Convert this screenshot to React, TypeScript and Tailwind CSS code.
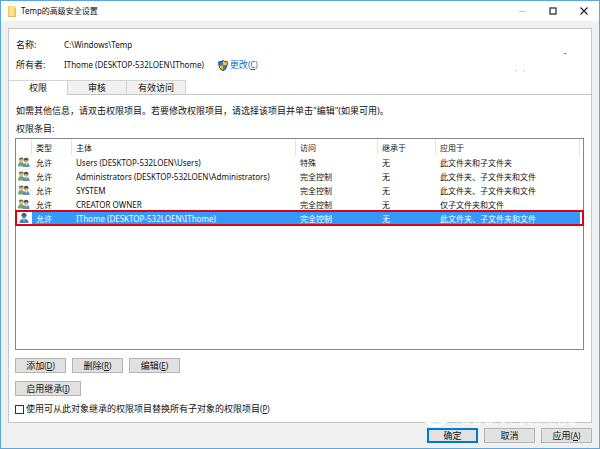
import type { ReactNode } from 'react';

const entries = [
  { icon: 'group', principal: 'Users (DESKTOP-532LOEN\\Users)', access: '特殊', applies: '此文件夹和子文件夹' },
  { icon: 'group', principal: 'Administrators (DESKTOP-532LOEN\\Administrators)', access: '完全控制', applies: '此文件夹、子文件夹和文件' },
  { icon: 'group', principal: 'SYSTEM', access: '完全控制', applies: '此文件夹、子文件夹和文件' },
  { icon: 'group', principal: 'CREATOR OWNER', access: '完全控制', applies: '仅子文件夹和文件' },
  { icon: 'user', principal: 'IThome (DESKTOP-532LOEN\\IThome)', access: '完全控制', applies: '此文件夹、子文件夹和文件', selected: true },
];

function FolderIcon() {
  return (
    <svg width="10" height="13" viewBox="0 0 10 13" aria-hidden="true">
      <path d="M1 1h7v1.5h1V12H1z" fill="#fbdc7c" />
      <path d="M1 1h1.4v11H1z" fill="#f3c95a" />
      <path d="M7.6 2.5H9V12H7.6z" fill="#f0c557" />
      <path d="M2.4 2h4v8h-4z" fill="#ffe594" />
      <path d="M1 11h8v1H1z" fill="#e8bd55" />
    </svg>
  );
}

function ShieldIcon() {
  return (
    <svg width="10" height="11" viewBox="0 0 10 11" aria-hidden="true">
      <path d="M5 0C3.8 1 2 1.4.3 1.5 0 6.500 1.600 9.600 5 11 8.400 9.600 10 6.500 9.700 1.500 8 1.400 6.200 1 5 0z" fill="#34383f" />
      <path d="M5 1.100C4 1.800 2.700 2.200 1.200 2.300c0 1.200 0 2.100.2 3.100H5z" fill="#2a7fd4" />
      <path d="M5 1.100c1 .7 2.300 1.100 3.800 1.200 0 1.200 0 2.100-.2 3.100H5z" fill="#f9c62c" />
      <path d="M1.400 5.400H5v4.600C3 9 1.800 7.600 1.400 5.400z" fill="#f9c62c" />
      <path d="M8.600 5.400H5v4.600C7 9 8.200 7.600 8.600 5.400z" fill="#2a7fd4" />
    </svg>
  );
}

function GroupIcon() {
  return (
    <svg className="block" width="12" height="10" viewBox="0 0 12 10" aria-hidden="true">
      <path d="M0 9.500C0 6.300 1 5 3 5c2.200 0 3.500 1.200 3.500 4.500z" fill="#74a868" />
      <circle cx="3.200" cy="3.100" r="2.300" fill="#dfbb8a" />
      <path d="M.9 3.300C.6 1.200 1.800.4 3.300.4c1.500 0 2.400.8 2.200 2.100C4 2.200 2.300 1.600.9 3.300z" fill="#766344" />
      <path d="M4.800 10c0-3 1.200-4.100 3.600-4.100S11.600 7 11.600 10z" fill="#5b93ba" />
      <path d="M7.500 6h1.800l-.9 2.300z" fill="#e9f1f6" />
      <circle cx="8.100" cy="3.700" r="2.100" fill="#cfa67a" />
      <path d="M5.800 4C5.400 1.800 6.500.8 8.200.8s2.600 1.200 2.200 3.100C9.500 2.800 7.500 2.300 5.800 4z" fill="#574d40" />
    </svg>
  );
}

function UserIcon() {
  return (
    <svg className="block" width="12" height="10" viewBox="0 0 12 10" aria-hidden="true">
      <path d="M1.500 10c0-3 1.500-4.200 4.500-4.200s4.500 1.200 4.500 4.200z" fill="#3f86b5" />
      <path d="M5 5.700h2L6 8.200z" fill="#d8e9f3" />
      <circle cx="6" cy="3.100" r="2.300" fill="#4c87ad" />
      <path d="M3.500 3.200C3.200 1 4.500 0 6 0s2.800 1 2.500 3.200C7.400 2 5 1.600 3.500 3.200z" fill="#24557a" />
    </svg>
  );
}

function Mnemonic({ letter }: { letter: string }) {
  return (
    <span className="text-[8px]">
      (<u>{letter}</u>)
    </span>
  );
}

function DialogButton({ children, className = 'w-[51px]', primary = false }: { children: ReactNode; className?: string; primary?: boolean }) {
  return (
    <button
      type="button"
      className={`flex h-[15px] items-center justify-center whitespace-nowrap bg-[#e1e1e1] text-[9px] ${
        primary ? 'border-2 border-[#0078d7]' : 'border border-[#b4b4b4]'
      } ${className}`}
    >
      <span>{children}</span>
    </button>
  );
}

export default function App() {
  return (
    <div className="flex min-h-screen flex-col border border-[#5ba7e0] bg-[#f0f0f0] font-['Noto_Sans','Noto_Sans_CJK_SC',sans-serif] text-[9px] leading-[14px] text-[#111]">
      {/* Title bar */}
      <header className="flex h-5 shrink-0 items-center bg-white pl-1.5">
        <FolderIcon />
        <h1 className="ml-1 flex-1 text-[8px]">Temp的高级安全设置</h1>
        <button type="button" aria-label="最小化" className="flex h-5 w-[30px] items-center justify-center">
          <svg width="8" height="8" viewBox="0 0 8 8">
            <path d="M0 4.500h7" stroke="#c8c8c8" />
          </svg>
        </button>
        <button type="button" aria-label="最大化" className="flex h-5 w-[30px] items-center justify-center">
          <svg width="8" height="8" viewBox="0 0 8 8">
            <rect x="1" y="1" width="6" height="6" fill="none" stroke="#333" strokeWidth="1.300" />
          </svg>
        </button>
        <button type="button" aria-label="关闭" className="flex h-5 w-[31px] items-center justify-center">
          <svg width="8" height="8" viewBox="0 0 8 8">
            <path d="M.5.5l7 7M7.500.5l-7 7" stroke="#222" strokeWidth="1.200" />
          </svg>
        </button>
      </header>

      <main className="mx-[7px] mt-[7px] flex flex-1 flex-col border border-[#c6c6c6] bg-white">
        {/* Object info */}
        <section className="relative px-[7px] pt-[9px] pb-2">
          <dl className="grid grid-cols-[48px_1fr] gap-y-1.5">
            <dt>名称:</dt>
            <dd className="text-[8px]">C:\Windows\Temp</dd>
            <dt>所有者:</dt>
            <dd className="flex items-center text-[8px]">
              IThome (DESKTOP-532LOEN\IThome)
              <a href="#change" className="ml-3.5 flex items-center gap-0.5 text-[9px] text-[#0a6cce]">
                <ShieldIcon />
                <span>更改<Mnemonic letter="C" /></span>
              </a>
            </dd>
          </dl>
          <svg className="absolute top-6 right-[23px] text-[#777]" width="54" height="20" viewBox="0 0 54 20" aria-hidden="true">
            <path d="M50 0h3l-1 1h-2z" fill="currentColor" />
            <path d="M2 17.500h1M9 17.500h1" stroke="#aaa" />
          </svg>
        </section>

        {/* Tabs */}
        <div role="tablist" className="flex h-[15px] shrink-0">
          <button type="button" role="tab" aria-selected="true" className="w-[59px] border-t border-r border-[#d4d4d4]">
            权限
          </button>
          <button type="button" role="tab" aria-selected="false" className="w-[59px] border-y border-r border-[#d4d4d4] border-b-[#c6c6c6] bg-[#f0f0f0]">
            审核
          </button>
          <button type="button" role="tab" aria-selected="false" className="w-[59px] border-y border-r border-[#d4d4d4] border-b-[#c6c6c6] bg-[#f0f0f0]">
            有效访问
          </button>
          <div className="flex-1 border-b border-[#c6c6c6]"></div>
        </div>

        <section className="flex flex-1 flex-col px-1.5 pt-[9px] pb-1.5">
          <p className="px-px">如需其他信息，请双击权限项目。若要修改权限项目，请选择该项目并单击"编辑"(如果可用)。</p>
          <p className="mt-1 px-px">权限条目:</p>

          {/* Permission entries */}
          <div className="mt-0.5 mr-px flex-1 border border-[#828790]">
            <table className="w-full table-fixed border-separate border-spacing-0 text-left text-[8px] leading-[13px]">
              <colgroup>
                <col className="w-4" />
                <col className="w-10" />
                <col />
                <col className="w-[82px]" />
                <col className="w-[58px]" />
                <col className="w-[144px]" />
                <col className="w-[3px]" />
              </colgroup>
              <thead>
                <tr className="h-4 *:border-r *:border-[#e2e2e2] *:p-0 *:font-normal">
                  <th></th>
                  <th><span className="pl-1">类型</span></th>
                  <th><span className="pl-1">主体</span></th>
                  <th><span className="pl-1">访问</span></th>
                  <th><span className="pl-1">继承于</span></th>
                  <th><span className="pl-1">应用于</span></th>
                  <td className="border-r-0!"></td>
                </tr>
              </thead>
              <tbody>
                {entries.map((entry) => {
                  const cell = entry.selected ? 'bg-[#3399ff] p-0 pl-1 text-white' : 'p-0 pl-1';
                  return (
                    <tr
                      key={entry.principal}
                      className={entry.selected ? 'h-3.5 outline-2 -outline-offset-1 outline-[#e00016]' : 'h-3.5'}
                    >
                      <td className="p-0 pl-0.5">{entry.icon === 'group' ? <GroupIcon /> : <UserIcon />}</td>
                      <td className={cell}>允许</td>
                      <td className={cell}>{entry.principal}</td>
                      <td className={cell}>{entry.access}</td>
                      <td className={cell}>无</td>
                      <td className={cell}>{entry.applies}</td>
                      <td className="p-0"></td>
                    </tr>
                  );
                })}
              </tbody>
            </table>
          </div>

          <div className="mt-2 flex gap-1.5">
            <DialogButton>添加<Mnemonic letter="D" /></DialogButton>
            <DialogButton>删除<Mnemonic letter="R" /></DialogButton>
            <DialogButton>编辑<Mnemonic letter="E" /></DialogButton>
          </div>
          <div className="mt-2 flex">
            <DialogButton className="w-[66px]">启用继承<Mnemonic letter="I" /></DialogButton>
          </div>
          <label className="mt-1.5 flex items-center gap-0.5">
            <input type="checkbox" className="size-[9px] appearance-none border border-[#333] bg-white" />
            <span>使用可从此对象继承的权限项目替换所有子对象的权限项目<Mnemonic letter="P" /></span>
          </label>
        </section>
      </main>

      <footer className="relative flex justify-end gap-1.5 px-[7px] pt-[5px] pb-[5px]">
        {/* Watermark over the panel's lower edge */}
        <div className="pointer-events-none absolute -top-2 right-5 flex items-start gap-2.5 text-white">
          <svg width="30" height="12" viewBox="0 0 30 12" aria-hidden="true">
            <path d="M0 5h30c-3 1-3 2-5 3-5 5-15 5-20 0-2-1-2-2-5-3z" fill="currentColor" />
            <path d="M9 7h12c-3 2-9 2-12 0z" fill="#e4e4e4" />
          </svg>
          <span className="font-['Liberation_Sans',sans-serif] text-[9px] leading-[14px] tracking-[3px]">WWW.PC841.COM</span>
        </div>
        <DialogButton primary>确定</DialogButton>
        <DialogButton>取消</DialogButton>
        <DialogButton>应用<Mnemonic letter="A" /></DialogButton>
      </footer>
    </div>
  );
}
